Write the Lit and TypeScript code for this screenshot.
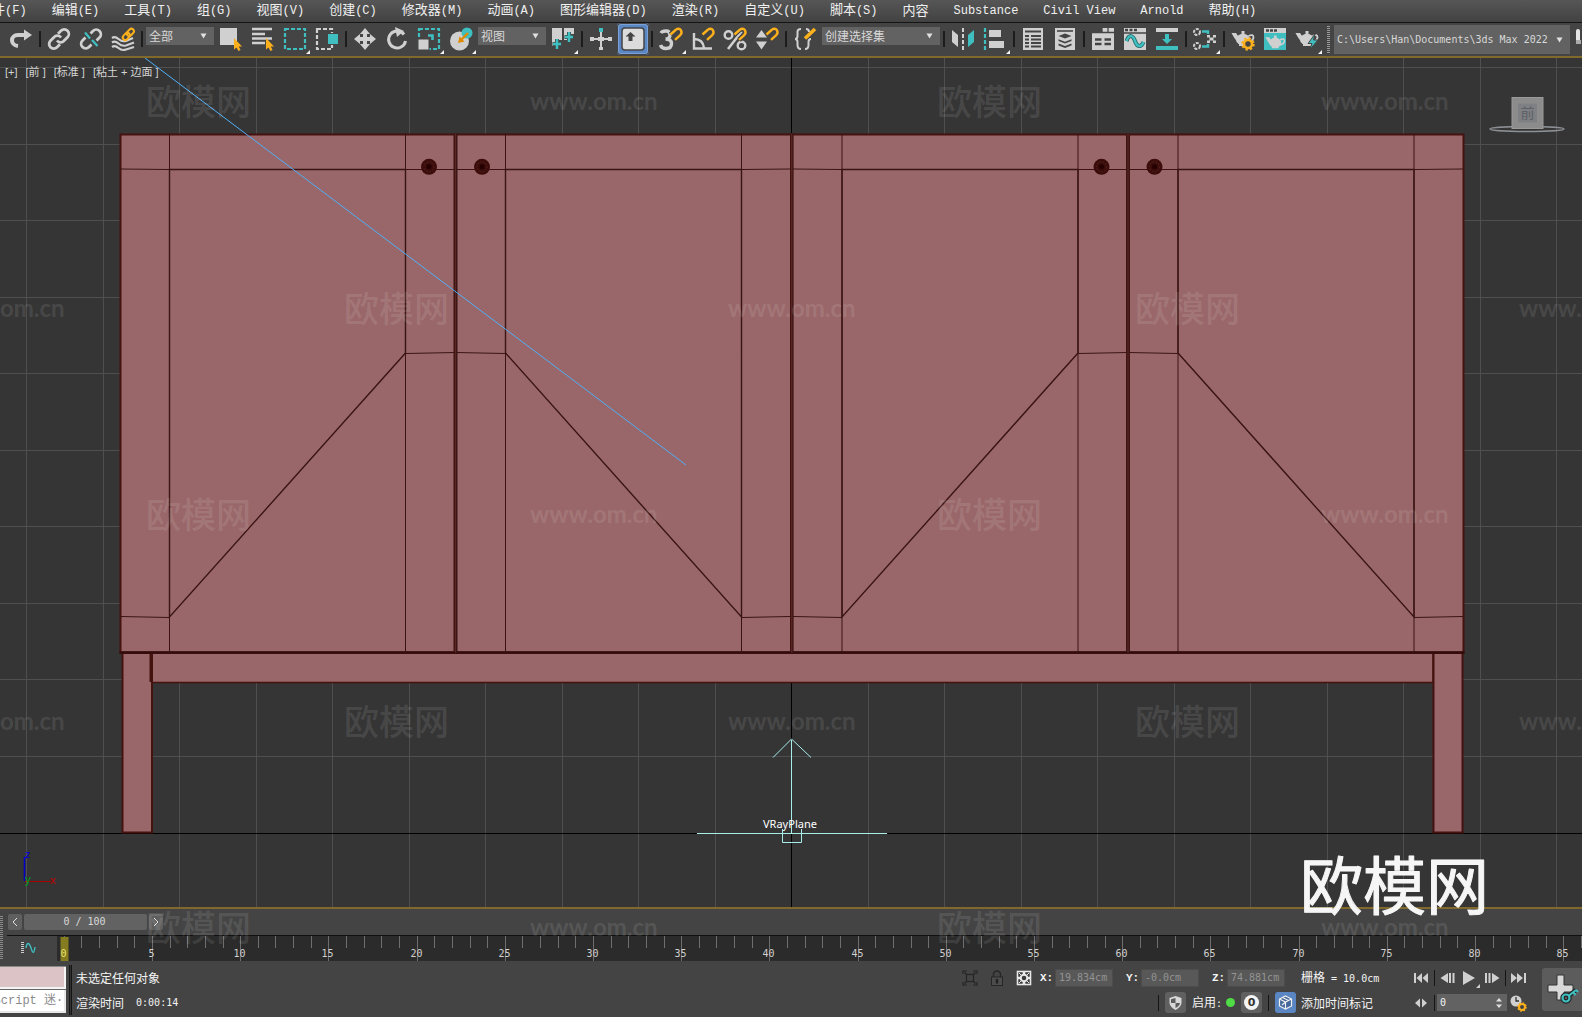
import { LitElement, html, svg, css, nothing, type TemplateResult, type SVGTemplateResult } from "lit";
import { customElement, property } from "lit/decorators.js";
import { classMap } from "lit/directives/class-map.js";

/** Splits a label so that Latin and CJK runs can take their own font size. */
const mixed = (text: string) =>
  (text.match(/[\u3400-\u9fff]+|[^\u3400-\u9fff]+/g) ?? []).map((run) =>
    /[\u3400-\u9fff]/.test(run) ? run : html`<span class="latin">${run}</span>`
  );

const L = "#d0d0d0";
const T = "#40bfc1";
const O = "#fbb01c";

const magnet = svg`<path d="M11.500 7.500L16.500 3Q20 0.500 22 3.200Q23.500 6 21 8.300L16 12.800" fill="none" stroke="#444" stroke-width="5"/><path d="M11.500 7.500L16.500 3Q20 0.500 22 3.200Q23.500 6 21 8.300L16 12.800" fill="none" stroke=${O} stroke-width="2.400"/>`;
const cursor = svg`<path d="M15 11V22.500L17.500 20.500L19.500 24L21.500 23L19.800 19.500H23Z" fill=${O}/>`;
const teapot = svg`<ellipse cx="12" cy="12.500" rx="7" ry="5.800" fill=${L}/><path d="M8 17H16V19H8ZM10.500 7V4H13.500V7Z" fill=${L}/><path d="M0.500 6H5L7 9L6.500 15Q3.500 12 0.500 6Z" fill=${L}/><path d="M17.500 9Q22.500 6.500 22.500 10.500Q22 14 17.500 15" fill="none" stroke=${L} stroke-width="1.800"/>`;

const icons: Record<string, SVGTemplateResult> = {
  redo: svg`<path d="M9 19C1 18 1 8 9 8H17" fill="none" stroke=${L} stroke-width="4"/><path d="M15 2.500L23 8L15 13.500Z" fill=${L}/>`,
  link: svg`<g fill="none" stroke=${L} stroke-width="2.800"><path d="M10 13.500a4.500 4.500 0 0 0 7 .3l3.500-3.500a4.500 4.500 0 0 0-6.500-6.500l-3 3"/><path d="M14 10.500a4.500 4.500 0 0 0-7-.3l-3.500 3.500a4.500 4.500 0 0 0 6.500 6.500l3-3"/></g>`,
  unlink: svg`<g fill="none" stroke=${L} stroke-width="2.800"><path d="M11.500 6.500l2.500-2.500a4.500 4.500 0 0 1 6.500 6.500l-3 3"/><path d="M6.500 10.500l-3 3a4.500 4.500 0 0 0 6.500 6.500l2.500-2.500"/></g><path d="M6 5.500L11 11.500M13 13L18.500 19" stroke=${T} stroke-width="2.200"/>`,
  bind: svg`<g fill="none" stroke=${L} stroke-width="2.200"><path d="M1 11Q4 9 7.500 12T15 14L22 11"/><path d="M1 15.500Q4 13.500 7.500 16.500T15 18.500L23 15.500"/><path d="M1 20Q4 18 7.500 21T15 22.500L23 20"/></g><g fill="none" stroke=${O} stroke-width="2"><rect x="15" y="3" width="8" height="5" rx="2.500" transform="rotate(-45 19 5)"/><rect x="11" y="7" width="8" height="5" rx="2.500" transform="rotate(-45 15 9)"/></g>`,
  pick: svg`<rect x="1" y="1" width="17" height="17" fill=${L}/>${cursor}`,
  pickName: svg`<path d="M1 2H21M1 7H14M1 11.500H21M1 16H14" stroke=${L} stroke-width="2.400"/>${cursor}`,
  region: svg`<rect x="2" y="2" width="20" height="20" fill="none" stroke=${T} stroke-width="2.200" stroke-dasharray="4 2"/>`,
  crossing: svg`<rect x="2" y="2" width="15" height="20" fill="none" stroke=${L} stroke-width="2.200" stroke-dasharray="4 2"/><rect x="12" y="6" width="12" height="12" fill="#444"/><rect x="13" y="7" width="10" height="10" fill=${T}/>`,
  move: svg`<path d="M12 4V20M4 12H20" stroke=${L} stroke-width="4"/><path d="M12 1L17 7H7ZM12 23L17 17H7ZM1 12L7 7V17ZM23 12L17 17V7Z" fill=${L}/>`,
  rotate: svg`<path d="M19 7.500A8.500 8.500 0 1 0 20.500 14" fill="none" stroke=${L} stroke-width="3"/><path d="M10 0L19 4L12 10Z" fill=${L}/>`,
  scale: svg`<rect x="2" y="2" width="20" height="20" fill="none" stroke=${T} stroke-width="2.200" stroke-dasharray="4 2"/><rect x="1" y="12" width="11" height="11" fill=${L} stroke="#444"/><path d="M11 8.500H15.500V13" fill="none" stroke=${T} stroke-width="2.600"/>`,
  place: svg`<circle cx="10.500" cy="14" r="9.500" fill=${L}/><circle cx="18" cy="6" r="5.500" fill=${T}/><path d="M19 6L12 13" stroke="#e08a00" stroke-width="2.400"/><path d="M9 16L10.500 9.500L15.500 14.500Z" fill="#e08a00"/>`,
  pivot: svg`<path d="M1 1H11V13H7V19H1ZM13 1H23V7H19V13H13Z" fill=${L}/><path d="M6 12V22M1.500 17H10.500M18 5V15M13.500 10H22.500" stroke="#3c4c4c" stroke-width="4"/><path d="M6 12V22M2 17H10M18 5V15M14 10H22" stroke=${T} stroke-width="2.400"/>`,
  manipulate: svg`<path d="M12 5V23M2 12H22" stroke=${L} stroke-width="2"/><path d="M1 10H5V14H1ZM19 10H23V14H19ZM9 10H15V14H9ZM10 20H14V23H10Z" fill=${L}/><path d="M10 1H14V5H10Z" fill=${T}/>`,
  keyboard: svg`<rect x="1" y="1" width="22" height="22" rx="3" fill="#dcdcdc" stroke="#444" stroke-width="1.500"/><path d="M9.500 5L14.500 9.500H11.500V14H7.500V9.500H4.500Z" fill="#444"/>`,
  snap: svg`<path d="M2 6Q3 4 7 4Q11 4 11 8Q11 12 6.500 12Q12.500 12 12.500 16.500Q12.500 21.500 7 21.500Q2.500 21.500 1.500 18" fill="none" stroke=${L} stroke-width="3.400"/>${magnet}`,
  angle: svg`<path d="M3 6V21.500H21M3 12Q12 12 13 21" fill="none" stroke=${L} stroke-width="2.400"/>${magnet}`,
  percent: svg`<circle cx="5.500" cy="8" r="3.800" fill="none" stroke=${L} stroke-width="2.400"/><circle cx="18.500" cy="18.500" r="3.800" fill="none" stroke=${L} stroke-width="2.400"/><path d="M19 4L5 22" stroke=${L} stroke-width="2.600"/>${magnet}`,
  spinner: svg`<path d="M1 10.500L6.500 3L12 10.500ZM1 14.500H12L6.500 22.500Z" fill=${L}/>${magnet}`,
  braces: svg`<path d="M8 2Q4 2 4.500 6V9Q4.500 12 2 12Q4.500 12 4.500 15V18Q4.500 22 8 22M13 2Q16 2 16 5M18 12Q15.500 12 15.500 15V18Q15.500 22 12 22" fill="none" stroke=${L} stroke-width="2"/><path d="M12 11.500L22 2" stroke=${O} stroke-width="3.600"/>`,
  mirror: svg`<path d="M1 3L7 8V20L1 15Z" fill=${L}/><path d="M12 1V23" stroke=${L} stroke-width="2" stroke-dasharray="4 2"/><path d="M23 3L17 8V20L23 15Z" fill=${T}/>`,
  align: svg`<path d="M2 1V23" stroke=${T} stroke-width="2.200" stroke-dasharray="4 2"/><rect x="6" y="3" width="12" height="7" fill=${L}/><rect x="6" y="14" width="15" height="7" fill=${L}/>`,
  layers: svg`<rect x="2" y="1" width="20" height="22" fill=${L}/><path d="M4 4.500H20M4 9H8M10 9H20M4 12.500H8M10 12.500H20M4 16H8M10 16H20M4 19.500H8M10 19.500H20" stroke="#444" stroke-width="1.800"/>`,
  stack: svg`<rect x="2" y="1" width="20" height="22" fill=${L}/><path d="M4 4H20" stroke="#444" stroke-width="1.600"/><path d="M5.500 9L12 6.500L18.500 9L12 11.500ZM5.500 12.200L12 14.700L18.500 12.200V14L12 16.500L5.500 14ZM5.500 16.500L12 19L18.500 16.500V18.500L12 21L5.500 18.500Z" fill="#444"/>`,
  ribbon: svg`<rect x="1" y="1" width="22" height="22" fill=${L}/><path d="M1 1H11V5H1Z" fill="#444"/><path d="M1 5.500H11V1M17 1V5.500M11 5.500H23" fill="none" stroke="#444" stroke-width="1.300"/><path d="M4 12.500H10.500M13.500 12.500H20M4 17H10.500M13.500 17H20" stroke="#444" stroke-width="2.600"/>`,
  curve: svg`<rect x="1" y="1" width="22" height="22" fill=${L}/><path d="M1 6H23" stroke="#444" stroke-width="1.500"/><path d="M2 3H5M6.500 3H9.500M11 3H14" stroke="#444" stroke-width="2.600"/><path d="M3.500 14C6 7 10 8 12 14S18 21 20.500 15" fill="none" stroke="#23686a" stroke-width="4"/><path d="M3.500 14C6 7 10 8 12 14S18 21 20.500 15" fill="none" stroke=${T} stroke-width="2.400"/>`,
  dope: svg`<path d="M1 3H23" stroke=${L} stroke-width="4"/><path d="M1 21H23" stroke=${T} stroke-width="4"/><path d="M10 7H14V12H17L12 17L7 12H10Z" fill=${T}/>`,
  schematic: svg`<g fill="none" stroke=${L} stroke-width="2" stroke-dasharray="3 1.200"><circle cx="4" cy="5" r="3"/><circle cx="4" cy="19" r="3"/></g><path d="M9 4.500H15V7M9 19.500H15V17" fill="none" stroke=${T} stroke-width="2.400"/><path d="M14 8H17V10.500H20V8H23V10.500H20.500V13.500H23V16H20V13.500H17V16H14V13.500H16.500V10.500H14Z" fill=${L}/>`,
  renderSetup: svg`${teapot}<circle cx="17" cy="17" r="4" fill="#444" stroke=${O} stroke-width="2.600"/><circle cx="17" cy="17" r="5.800" fill="none" stroke=${O} stroke-width="1.800" stroke-dasharray="2.400 2.150"/>`,
  renderFrame: svg`<rect x="1" y="1" width="22" height="22" fill=${T}/><rect x="1" y="1" width="22" height="5" fill=${L}/><path d="M3 3.500H6M7 3.500H10M11 3.500H14" stroke="#444" stroke-width="2.600"/><g transform="translate(2,5) scale(.86)">${teapot}</g>`,
  render: svg`${teapot}<path d="M20 7L13 16.500H17L14.500 23L23 13H18.500Z" fill=${T} stroke="#444" stroke-width="1"/>`,
  pin: svg`<rect x="2" y="2" width="4" height="15" rx="2" fill="#e4e4e4"/><rect x="2" y="13" width="5" height="4" fill="#aaa"/>`,
};

interface Tool { kind: "tool"; id: string; label: string; fly?: boolean; on?: boolean }
interface Sep { kind: "sep" }
interface Pick { kind: "pick"; value: string; label: string; wide?: boolean }
const tool = (id: string, label: string, fly = false, on = false): Tool => ({ kind: "tool", id, label, fly, on });
const sep: Sep = { kind: "sep" };

const toolbar: (Tool | Sep | Pick)[] = [
  tool("redo", "重做"), sep,
  tool("link", "链接"), tool("unlink", "取消链接"), tool("bind", "绑定到空间扭曲"), sep,
  { kind: "pick", value: "全部", label: "选择过滤器" },
  tool("pick", "选择对象"), tool("pickName", "按名称选择"), tool("region", "矩形选择区域", true), tool("crossing", "窗口/交叉"), sep,
  tool("move", "移动"), tool("rotate", "旋转"), tool("scale", "缩放", true), tool("place", "放置", true),
  { kind: "pick", value: "视图", label: "参考坐标系" },
  tool("pivot", "使用轴点中心", true), sep,
  tool("manipulate", "选择并操纵"), tool("keyboard", "键盘快捷键覆盖", false, true), sep,
  tool("snap", "捕捉开关", true), tool("angle", "角度捕捉"), tool("percent", "百分比捕捉"), tool("spinner", "微调器捕捉"), sep,
  tool("braces", "编辑命名选择集"),
  { kind: "pick", value: "创建选择集", label: "命名选择集", wide: true }, sep,
  tool("mirror", "镜像"), tool("align", "对齐", true), sep,
  tool("layers", "场景资源管理器"), tool("stack", "层资源管理器"), sep,
  tool("ribbon", "功能区"), tool("curve", "曲线编辑器"), tool("dope", "摄影表"), sep,
  tool("schematic", "图解视图", true), sep,
  tool("renderSetup", "渲染设置"), tool("renderFrame", "渲染帧窗口"), tool("render", "渲染产品", true),
];

const menus = [
  "文件(F)", "编辑(E)", "工具(T)", "组(G)", "视图(V)", "创建(C)", "修改器(M)", "动画(A)", "图形编辑器(D)",
  "渲染(R)", "自定义(U)", "脚本(S)", "内容", "Substance", "Civil View", "Arnold", "帮助(H)",
];

const base = css`
  :host { display: block; box-sizing: border-box; }
  * { box-sizing: border-box; }
  button, input, select {
    margin: 0; padding: 0; border: 0; border-radius: 0; background: none;
    color: inherit; font: inherit; line-height: inherit;
  }
  svg { display: block; }
`;

@customElement("menu-bar")
export class MenuBar extends LitElement {
  static styles = [base, css`
    .bar {
      display: flex; gap: 25px; height: 23px; overflow: hidden; align-items: center;
      padding-bottom: 3px; border-bottom: 1px solid #151515;
      background: linear-gradient(#565656, #424242);
      color: #f0f0f0; font: 13px/19px "Noto Sans CJK SC", sans-serif;
    }
    .item { flex: none; white-space: pre; }
    .item:first-child { margin-left: -21px; }
    .latin { font-family: "Liberation Mono", monospace; font-size: 12px; }
  `];
  render() {
    return html`<nav class="bar">${menus.map((m) => html`<button class="item">${mixed(m)}</button>`)}</nav>`;
  }
}

@customElement("drop-down")
export class DropDown extends LitElement {
  @property() value = "";
  @property() label = "";
  static styles = [base, css`
    :host { background: #626262; color: #d8d8d8; }
    .box { display: grid; grid-template-columns: 1fr 14px; align-items: center; height: 100%; }
    .pick {
      grid-area: 1 / 1 / 2 / 3; width: 100%; height: 100%; padding-left: 3px; appearance: none;
      font: 12px/16px "Noto Sans CJK SC", sans-serif; text-overflow: clip;
    }
    .latin { font: 10px/16px "DejaVu Sans Mono", monospace; }
    .arrow { grid-area: 1 / 2; pointer-events: none; }
  `];
  render() {
    const latin = !/[\u3400-\u9fff]/.test(this.value);
    return html`<div class="box">
      <select class=${classMap({ pick: true, latin })} aria-label=${this.label}><option>${this.value}</option></select>
      <svg class="arrow" width="7" height="6" viewBox="0 0 7 6"><path d="M0.500 0.500H6.500L3.500 5.500Z" fill="#e0e0e0"/></svg>
    </div>`;
  }
}

@customElement("main-toolbar")
export class MainToolbar extends LitElement {
  static styles = [base, css`
    .bar { display: flex; height: 33px; overflow: hidden; background: #444; padding-left: 5px; }
    .tool { flex: none; width: 32px; height: 32px; }
    .on { background: #5a86c4; border-radius: 4px; box-shadow: inset 0 0 0 1px #444, inset 0 0 0 2px #7aa1d6; }
    .sep { flex: none; width: 2px; height: 16px; margin: 8px 2px 0; background: #1c1c1c; }
    .drop { flex: none; width: 68px; height: 18px; margin: 4px 1px 0; }
    .wide { width: 118px; }
    .handle {
      flex: none; width: 3px; height: 28px; margin: 3px 4px 0 4px;
      background: repeating-linear-gradient(#999 0 1px, transparent 1px 2px);
    }
    .path { flex: 1 1 auto; min-width: 100px; height: 29px; margin: 2px 0 0; }
    .last { width: 12px; overflow: hidden; }
    .last svg { width: 32px; }
  `];
  private entry(t: Tool | Sep | Pick): TemplateResult {
    if (t.kind === "sep") return html`<span class="sep"></span>`;
    if (t.kind === "pick")
      return html`<drop-down class=${classMap({ drop: true, wide: !!t.wide })} value=${t.value} label=${t.label}></drop-down>`;
    return html`<button class=${classMap({ tool: true, on: !!t.on })} aria-label=${t.label}>
      <svg width="32" height="32" viewBox="-4 -4 32 32">${icons[t.id]}${t.fly ? svg`<path d="M27 23V27H23Z" fill="#f4f4f4"/>` : nothing}</svg>
    </button>`;
  }
  render() {
    return html`<div class="bar">
      ${toolbar.map((t) => this.entry(t))}
      <span class="handle"></span>
      <drop-down class="path" value="C:\\Users\\Han\\Documents\\3ds Max 2022" label="项目路径"></drop-down>
      <button class="tool last" aria-label="固定"><svg width="32" height="32" viewBox="-4 -4 32 32">${icons.pin}</svg></button>
    </div>`;
  }
}

/* Scene geometry, in viewport pixels. */
const CX = 791.5;
const GRID = 76.5;
const FLOOR = 775.5;
const TOP = 75.5;
const BOTTOM = 594.5;

@customElement("view-port")
export class ViewPort extends LitElement {
  static styles = [base, css`
    :host { display: flex; min-height: 0; position: relative; background: #353535; border: solid #80692a; border-width: 2px 0; }
    .scene { flex: 1; width: 100%; min-height: 0; }
    .labels {
      position: absolute; left: 5px; top: 6px; display: flex; gap: 8px;
      color: #d4d4d4; font: 11px/16px "Liberation Sans", "Noto Sans CJK SC", sans-serif;
    }
    .label { white-space: pre; }
    .name { font: 11px "Noto Sans", sans-serif; fill: #fff; }
    .axis { font: 11px "Noto Sans", sans-serif; }
    .face { font: 14px "Noto Sans CJK SC", sans-serif; fill: #5d6066; }
  `];

  private grid() {
    const out: SVGTemplateResult[] = [];
    for (let i = -10; i <= 10; i++) {
      if (i === 0) continue;
      const x = Math.floor(CX + i * GRID) + 0.5;
      out.push(svg`<path d="M${x} 0V849" stroke="#4f4f4f"/>`);
    }
    for (let i = 1; i <= 10; i++) {
      const y = Math.floor(FLOOR - 0.6 - i * GRID) + 0.5;
      out.push(svg`<path d="M0 ${y}H1582" stroke="#4f4f4f"/>`);
    }
    return out;
  }

  /** One pair of doors whose meeting edge is at x = m. */
  private doors(m: number) {
    return svg`
      <path d="M${m - 286} ${TOP}V559M${m - 286} 559V${BOTTOM}M${m - 50} ${TOP}V${BOTTOM}M${m + 50} ${TOP}V${BOTTOM}M${m + 286} ${TOP}V${BOTTOM}" stroke-width="1"/>
      <path d="M${m - 335} 111L${m - 286} 111.500M${m - 50} 111.500H${m + 50}M${m + 286} 111.500L${m + 335} 111" stroke-width="1"/>
      <path d="M${m - 50} 295.500L${m} 294.500L${m + 50} 295.500M${m - 335} 558.500L${m - 286} 559.500M${m + 286} 559.500L${m + 335} 558.500" stroke-width="1"/>
      <path d="M${m - 50} 295V111.500H${m - 286}V559L${m - 50} 295M${m + 50} 295V111.500H${m + 286}V559L${m + 50} 295" stroke-width="1.400"/>
      <path d="M${m} ${TOP}V${BOTTOM}" stroke="#3d1614" stroke-width="4"/>
      <path d="M${m} ${TOP}V${BOTTOM}" stroke="#5c2826" stroke-width="1"/>
      ${[m - 26.5, m + 26.5].map((x) => svg`<circle cx=${x} cy="108.800" r="8" fill="#3a0c0a" stroke="none"/><circle cx=${x} cy="108.800" r="5" fill="none" stroke="#5a2624" stroke-dasharray="1.500 1.500"/><circle cx=${x} cy="108.800" r="2.500" fill="#240000" stroke="none"/>`)}
    `;
  }

  render() {
    return html`
      <svg class="scene" viewBox="0 0 1582 849" preserveAspectRatio="xMidYMid slice">
        ${this.grid()}
        <path d="M791.500 0V849M0 ${FLOOR}H1582" stroke="#000"/>
        <g fill="#99676a" stroke="#45120f" stroke-width="2">
          <rect x="151" y="595" width="1282" height="29.500" stroke-width="1.500"/>
          <rect x="122.500" y="595" width="29.500" height="179.500" stroke-width="2"/>
          <rect x="1433.500" y="595" width="29" height="179.500" stroke-width="2"/>
          <path d="M150.500 595V624" />
          <rect x="120.500" y="76.500" width="1343" height="518" stroke-width="2"/>
          <path d="M119.500 594.500H1464.500" stroke="#330b0a" stroke-width="2.400"/>
        </g>
        <g fill="none" stroke="#3a1412">
          ${this.doors(455.5)}${this.doors(1128)}
          <path d="M791.800 ${TOP}V${BOTTOM}" stroke-width="3.600"/>
          <path d="M791.800 ${TOP}V${BOTTOM}" stroke="#6a2a28" stroke-width="1"/>
        </g>
        <path d="M145 0L686 407" stroke="#4fb0f8" stroke-width="1"/>
        <g fill="none" stroke="#a6eeea">
          <path d="M791.500 682V775M773 699.500L791.500 681L811 699.500"/>
          <path d="M697 ${FLOOR}H887M782.500 771V784.500H801.500V771"/>
        </g>
        <text class="name" x="763" y="770">VRayPlane</text>
        <path d="M24.500 799V823" stroke="#0000c8" stroke-width="1.500"/>
        <path d="M25 823.500H51" stroke="#a80000"/>
        <text class="axis" x="25" y="800" fill="#0000e0">z</text>
        <text class="axis" x="50" y="826" fill="#c00000">x</text>
        <text class="axis" x="25" y="825" fill="#00a020">y</text>
        <ellipse cx="1527" cy="71" rx="37" ry="2.500" fill="none" stroke="#8c9094" stroke-width="1.500"/>
        <rect x="1512" y="39.500" width="31" height="31" fill="#8c8c8c" stroke="#9a9a9a"/>
        <rect x="1518" y="45.500" width="19" height="19" fill="#7f8083"/>
        <text class="face" x="1520.500" y="60">前</text>
      </svg>
      <div class="labels">
        ${["[+]", "[前 ]", "[标准 ]", "[粘土 + 边面 ]"].map((t) => html`<button class="label">${t}</button>`)}
      </div>`;
  }
}

@customElement("time-line")
export class TimeLine extends LitElement {
  static styles = [base, css`
    :host { color: #d8d8d8; background: #444; font: 10px/16px "DejaVu Sans Mono", monospace; }
    .wrap { display: flex; }
    .handle {
      flex: none; width: 3px; height: 43px; margin: 7px 4px 0 0;
      background: repeating-linear-gradient(#8a8a8a 0 1px, transparent 1px 2px);
    }
    .main { flex: 1; min-width: 0; }
    .slider { display: flex; gap: 2px; height: 26px; padding: 5px 0 0 1px; }
    .step { width: 14px; height: 16px; background: #5f5f5f; border-radius: 2px; }
    .step svg { margin: auto; }
    .thumb { width: 123px; height: 16px; padding-right: 2px; background: #626262; border-radius: 2px; }
    .row { display: flex; height: 26px; border-top: 1px solid #101010; }
    .curve { flex: none; align-self: flex-start; width: 50px; padding: 6px 0 0 14px; }
    .track { flex: 1; width: 0; height: 25px; overflow: hidden; background: #2b2b2b; }
    .num { fill: #cfcfcf; font: 10px "DejaVu Sans Mono", monospace; text-anchor: middle; }
    .now { fill: #e8e36a; }
  `];
  render() {
    const x = (f: number) => Math.floor(7.3 + f * 17.64) + 0.5;
    const frames = Array.from({ length: 101 }, (_, i) => i);
    return html`<div class="wrap">
      <span class="handle"></span>
      <div class="main">
        <div class="slider">
          <button class="step" aria-label="上一帧"><svg width="6" height="10" viewBox="0 0 6 10"><path d="M5 1L1 5L5 9" fill="none" stroke="#e0e0e0"/></svg></button>
          <button class="thumb">0 / 100</button>
          <button class="step" aria-label="下一帧"><svg width="6" height="10" viewBox="0 0 6 10"><path d="M1 1L5 5L1 9" fill="none" stroke="#e0e0e0"/></svg></button>
        </div>
        <div class="row">
          <button class="curve" aria-label="打开迷你曲线编辑器">
            <svg width="15" height="12" viewBox="0 0 15 12"><path d="M1.500 0V11" stroke="#ccc" stroke-width="3" stroke-dasharray="1 1"/><path d="M5 6C6 0 8 0 10 6S13 12 14 5" fill="none" stroke=${T} stroke-width="1.400"/></svg>
          </button>
          <svg class="track">
            ${frames.map((f) => svg`<path d="M${x(f)} 0V${f % 5 ? 12 : 25}" stroke="#6e6e6e"/>`)}
            <rect x="3.500" y="1" width="8" height="24" fill="#857c22"/>
            ${frames.filter((f) => f % 5 === 0).map((f) => svg`<text class=${f ? "num" : "num now"} x=${x(f) - 1} y="21">${f}</text>`)}
          </svg>
        </div>
      </div>
    </div>`;
  }
}

const axes = [
  { id: "x", label: "X:", value: "19.834cm" },
  { id: "y", label: "Y:", value: "-0.0cm" },
  { id: "z", label: "Z:", value: "74.881cm" },
];

@customElement("status-bar")
export class StatusBar extends LitElement {
  static styles = [base, css`
    :host { background: #444; color: #f4f4f4; font: 12px/18px "Noto Sans CJK SC", sans-serif; }
    .bar { display: flex; height: 56px; padding-top: 4px; overflow: hidden; }
    .latin { font-family: "DejaVu Sans Mono", monospace; font-size: 10px; white-space: pre; }
    .listener { flex: none; width: 66px; padding-top: 2px; display: grid; grid-template-rows: 22px 23px; gap: 1px; overflow: hidden; }
    .macro { width: 66px; background: #dcc3c5; border: solid #f4f4f4; border-width: 0 2px 2px 0; box-shadow: 0 -1px #888; }
    .mini { overflow: hidden; background: #fff; border: solid #e8e8e8; border-width: 0 2px 2px 0; box-shadow: 0 -1px #666; }
    .script { width: 100px; margin-left: -28px; height: 18px; color: #8a8a8a; font: 12px/18px "Liberation Mono", "Noto Sans CJK SC", monospace; }
    .rule { flex: none; width: 3px; margin: 0 4px 0 3px; height: 50px; border: solid #141414; border-width: 0 1px 0 1px; background: #333; }
    .rows { display: grid; grid-template-rows: 25px 25px; }
    .message { flex: 1; min-width: 0; white-space: nowrap; }
    .line { display: flex; align-items: center; }
    .coords { flex: none; }
    .end { justify-content: flex-end; }
    .state { width: 16px; height: 16px; margin-right: 11px; }
    .state.near { margin-right: 8px; }
    .tag { width: 15px; font: bold 11px/18px "Liberation Mono", monospace; white-space: pre; }
    .field { width: 58px; height: 18px; margin-right: 13px; padding-left: 3px; background: #585858; border: 1px solid #4c4c4c; color: #939393; font: 10px/16px "DejaVu Sans Mono", monospace; }
    .tail { width: 109px; margin-left: 3px; white-space: nowrap; }
    .tail.under { margin-left: 5px; }
    .sep { width: 1px; height: 16px; margin: 0 6px; background: #151515; }
    .chip { display: grid; place-items: center; width: 21px; height: 21px; border-radius: 3px; background: #606060; }
    .chip.blue { background: #5a86c4; }
    .enable { margin: 0 6px; width: 28px; white-space: nowrap; }
    .dot { width: 9px; height: 9px; margin-right: 6px; border-radius: 50%; background: #4fdc46; }
    .zero { display: grid; place-items: center; width: 15px; height: 15px; border-radius: 50%; background: #f4f4f4; color: #333; font: bold 11px/15px "DejaVu Sans", sans-serif; }
    .play { flex: none; width: 122px; }
    .key { width: 22px; height: 22px; display: grid; place-items: center; }
    .bound { width: 1px; height: 16px; margin: 0 2px; background: #151515; }
    .frame { width: 70px; height: 17px; display: flex; align-items: center; background: #626262; }
    .value { width: 58px; height: 17px; padding-left: 3px; font: 10px/16px "DejaVu Sans Mono", monospace; }
    .add { flex: none; width: 40px; height: 43px; margin-top: 3px; margin-left: 10px; background: #5c5c5c; border-radius: 3px 0 0 3px; }
  `];
  private key(label: string, shape: SVGTemplateResult) {
    return html`<button class="key" aria-label=${label}><svg width="22" height="22" viewBox="0 0 22 22" fill="#d0d0d0">${shape}</svg></button>`;
  }
  render() {
    return html`<div class="bar">
      <div class="listener">
        <input class="macro" aria-label="宏录制器" />
        <div class="mini"><input class="script" aria-label="MAXScript" .value=${"MAXScript 迷·"} /></div>
      </div>
      <span class="rule"></span>
      <div class="rows message">
        <div class="line">未选定任何对象</div>
        <div class="line">${mixed("渲染时间  0:00:14")}</div>
      </div>
      <div class="rows coords">
        <div class="line end">
          <button class="state" aria-label="孤立当前选择"><svg width="16" height="16" viewBox="0 0 16 16" fill="none" stroke="#252525" stroke-width="1.200"><rect x="4.500" y="4.500" width="7" height="7"/><path d="M1 4V1H5M11 1H15V4M15 12V15H11M5 15H1V12"/><path d="M2.500 2.500L4.500 4.500M13.500 2.500L11.500 4.500M2.500 13.500L4.500 11.500M13.500 13.500L11.500 11.500"/></svg></button>
          <button class="state" aria-label="选择锁定"><svg width="16" height="16" viewBox="0 0 16 16"><path d="M4.500 7V4.500A3.500 3.500 0 0 1 11.500 4.500V7" fill="none" stroke="#262626" stroke-width="1.400"/><rect x="2.500" y="7" width="11" height="8.500" fill="#4c4c4c" stroke="#262626"/><path d="M8 9V13.500" stroke="#202020" stroke-width="2.400"/></svg></button>
          <button class="state near" aria-label="绝对模式变换输入"><svg width="16" height="16" viewBox="0 0 16 16"><rect x="1.500" y="1.500" width="13" height="13" fill="#3a3a3a" stroke="#e8e8e8" stroke-width="1.600"/><path d="M8 1V15M1 8H15" stroke="#e8e8e8" stroke-width="2.600"/><path d="M3 3L13 13M13 3L3 13" stroke="#e8e8e8" stroke-width="1"/><circle cx="8" cy="8" r="3.300" fill="#3a3a3a" stroke="#e8e8e8" stroke-width="2"/></svg></button>
          ${axes.map((a) => html`<label class="tag" for=${a.id}>${a.label}</label><input class="field" id=${a.id} .value=${a.value} disabled />`)}
          <span class="tail">${mixed("栅格 = 10.0cm")}</span>
        </div>
        <div class="line end">
          <span class="sep"></span>
          <button class="chip" aria-label="安全"><svg width="13" height="14" viewBox="0 0 13 14"><path d="M6.500 0L12.500 2V7Q12 11 6.500 14Q1 11 .5 7V2Z" fill="#d8d8d8"/><path d="M6.500 2V7H2V3.200ZM6.500 7H11Q10.500 10 6.500 12Z" fill="#5c5c5c"/></svg></button>
          <span class="enable">${mixed("启用:")}</span>
          <span class="dot"></span>
          <button class="chip"><span class="zero">0</span></button>
          <span class="sep"></span>
          <button class="chip blue" aria-label="自适应降级"><svg width="15" height="15" viewBox="0 0 15 15" fill="#44689c" stroke="#f0f0f0" stroke-width="1.200"><path d="M7.500 1L13.500 4V11L7.500 14L1.500 11V4Z"/><path d="M1.500 4L7.500 7L13.500 4M7.500 7V14M4.500 2.500L10.500 5.500M4 10L7.500 7" /></svg></button>
          <button class="tail under line">添加时间标记</button>
        </div>
      </div>
      <div class="rows play">
        <div class="line">
          ${this.key("转至开头", svg`<path d="M4 6H6V16H4ZM12 6V16L6.500 11ZM18 6V16L12.500 11Z"/>`)}
          <span class="bound"></span>
          ${this.key("上一帧", svg`<path d="M11 6V16L3.500 11ZM12 6H14V16H12ZM15.500 6H17.500V16H15.500Z"/>`)}
          ${this.key("播放", svg`<path d="M4 4L16 11L4 18ZM21 17V21H17Z"/>`)}
          ${this.key("下一帧", svg`<path d="M4 6H6V16H4ZM7.500 6H9.500V16H7.500ZM11 6L18.500 11L11 16Z"/>`)}
          <span class="bound"></span>
          ${this.key("转至结尾", svg`<path d="M3 6L9 11L3 16ZM9 6L15 11L9 16ZM16 6H18V16H16Z"/>`)}
        </div>
        <div class="line">
          ${this.key("关键点模式", svg`<path d="M5 11L10 6.500V15.500ZM17 11L12 6.500V15.500Z"/>`)}
          <span class="bound"></span>
          <span class="frame">
            <input class="value" aria-label="当前帧" .value=${"0"} />
            <svg width="8" height="12" viewBox="0 0 8 12" fill="#e0e0e0"><path d="M1 4.500L4 1L7 4.500ZM1 7.500H7L4 11Z"/></svg>
          </span>
          ${this.key("时间配置", svg`<circle cx="9" cy="9" r="5.500"/><path d="M9 5V9H12" fill="none" stroke="#333" stroke-width="1.300"/><circle cx="15" cy="15" r="3" fill="#444" stroke=${O} stroke-width="2"/><circle cx="15" cy="15" r="4.200" fill="none" stroke=${O} stroke-width="1.200" stroke-dasharray="1.600 1.700"/>`)}
        </div>
      </div>
      <button class="add" aria-label="设置关键点">
        <svg width="40" height="43" viewBox="0 0 40 43"><path d="M15 7H22V17H31V24H22V32H15V24H6V17H15Z" fill="#d8d8d8" stroke="#333"/><g fill="none" stroke="#222" stroke-width="4.500"><circle cx="24" cy="30" r="3.500"/><path d="M26.500 28L34 22"/></g><g fill="none" stroke=${T} stroke-width="2.200"><circle cx="24" cy="30" r="3.500"/><path d="M26.500 28L34 22M31 24L33.500 27M34 22L36 24"/></g></svg>
      </button>
    </div>`;
  }
}

@customElement("water-marks")
export class WaterMarks extends LitElement {
  static styles = [base, css`
    .layer { width: 100%; height: 100%; }
    .mark { font: 500 35px "Noto Sans CJK SC", sans-serif; }
    .site { font: bold 24px Lato, sans-serif; }
    .faint { fill: #fff; fill-opacity: 0.11; }
    .logo { font: 400 63px "Noto Sans CJK SC", sans-serif; fill: #f6f6f6; stroke: #f6f6f6; stroke-width: 1px; stroke-linejoin: round; }
  `];
  render() {
    const rows = [0, 1, 2, 3, 4];
    return html`<svg class="layer" viewBox="0 0 1582 1017" preserveAspectRatio="xMidYMid slice">
      <g class="faint">
        ${rows.map((r) => {
          const y = Math.round(r * 206.5);
          const shift = r % 2 ? 198 : 0;
          return [-791, 0, 791].map((x) => svg`
            <text class="mark" x=${x + shift + 146} y=${y + 115}>欧模网</text>
            <text class="site" x=${x + shift + 530} y=${y + 110}>www.om.cn</text>`);
        })}
      </g>
      <text class="logo" x="1300" y="909">欧模网</text>
    </svg>`;
  }
}

@customElement("app-root")
export class AppRoot extends LitElement {
  static styles = [base, css`
    .shell {
      position: relative; display: grid; min-height: 100vh; overflow: hidden; background: #444;
      grid-template-columns: minmax(0, 1fr); grid-template-rows: auto auto minmax(0, 1fr) auto auto;
    }
    .marks { position: absolute; inset: 0; pointer-events: none; }
  `];
  render() {
    return html`<div class="shell">
      <menu-bar></menu-bar>
      <main-toolbar></main-toolbar>
      <view-port></view-port>
      <time-line></time-line>
      <status-bar></status-bar>
      <water-marks class="marks"></water-marks>
    </div>`;
  }
}
